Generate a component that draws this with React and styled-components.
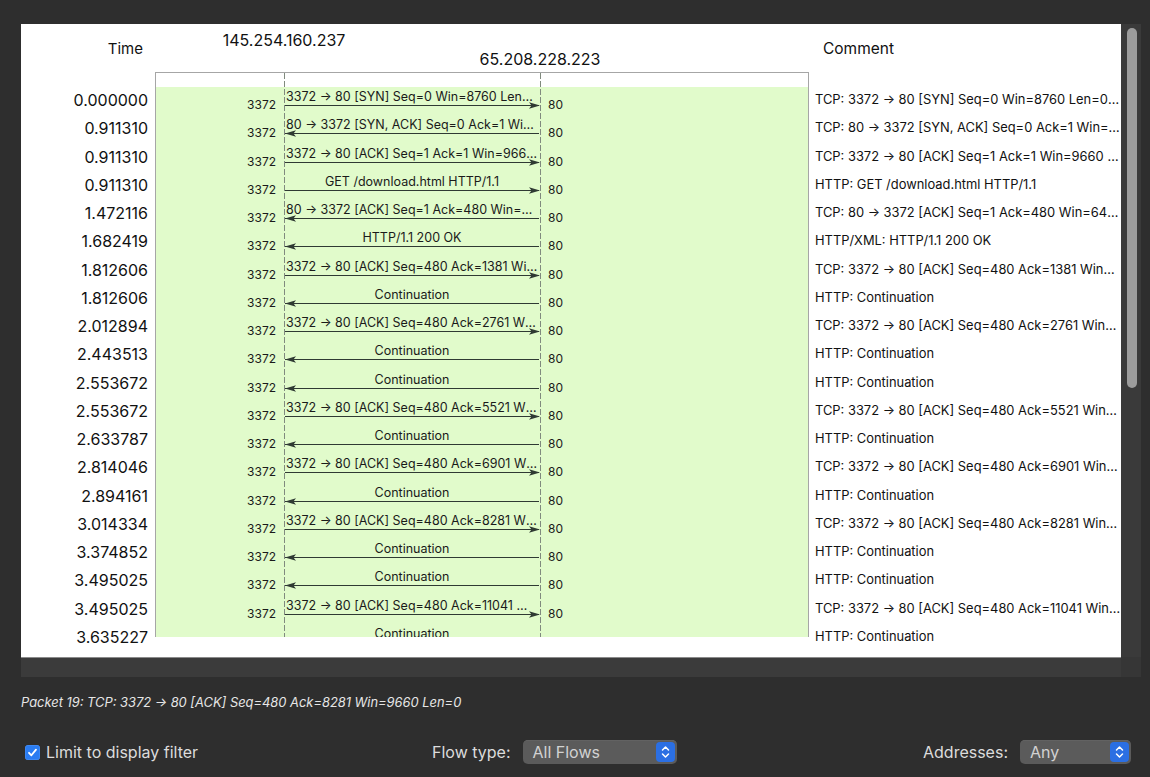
import React from 'react';
import styled, { createGlobalStyle } from 'styled-components';

const FONT = `Inter, "Noto Sans", "Liberation Sans", sans-serif`;
const ROW_H = 28.25;

const GlobalStyle = createGlobalStyle`
  html, body { margin: 0; padding: 0; background: #2e2e2e; }
  body { font-family: ${FONT}; width: 1150px; height: 777px; overflow: hidden; }
  * { box-sizing: border-box; }
`;

const Window = styled.div`
  width: 1150px;
  height: 777px;
  background: #2e2e2e;
  padding-top: 24px;
  display: flex;
  flex-direction: column;
`;

const PlotFrame = styled.div`
  display: flex;
  margin-left: 21px;
  height: 653px;
`;

const PlotMain = styled.div`
  width: 1100px;
  display: flex;
  flex-direction: column;
`;

const Sheet = styled.div`
  height: 633px;
  background: #fff;
  display: grid;
  grid-template-columns: 134px 654px 1fr;
  overflow: hidden;
`;

const HScroll = styled.div`
  height: 20px;
  background: #3b3b3b;
  border-top: 1px solid #8a8a8a;
`;

const VScroll = styled.div`
  width: 20px;
  display: flex;
  flex-direction: column;
`;

const VTrack = styled.div`
  height: 633px;
  background: #3a3a3a;
  padding: 4px 0 0 6px;
`;

const VCorner = styled.div`
  height: 20px;
  background: #363636;
`;

const Thumb = styled.div`
  width: 10px;
  height: 360px;
  border-radius: 5px;
  background: #9c9c9c;
`;

const Column = styled.div`
  display: flex;
  flex-direction: column;
  min-width: 0;
`;

const ColHeader = styled.div`
  height: 62px;
  padding-top: 15px;
  font-size: ${(p) => p.$size || 15}px;
  line-height: 20px;
  color: #111;
  text-align: ${(p) => p.$align || 'left'};
  padding-left: ${(p) => p.$pl || 0}px;
  padding-right: ${(p) => p.$pr || 0}px;
`;

const TimeCell = styled.div`
  height: ${ROW_H}px;
  display: flex;
  align-items: center;
  justify-content: flex-end;
  padding-right: 7px;
  font-size: 16px;
  color: #111;
`;

const CommentCell = styled.div`
  height: ${ROW_H}px;
  line-height: ${ROW_H}px;
  padding-left: 6px;
  font-size: 12.9px;
  color: #111;
  white-space: nowrap;
  overflow: hidden;
  text-overflow: ellipsis;
`;

const GraphHead = styled.div`
  height: 48px;
  position: relative;
`;

const NodeLabel = styled.div`
  position: absolute;
  left: ${(p) => p.$x}px;
  top: ${(p) => p.$y}px;
  transform: translateX(-50%);
  font-size: 16px;
  line-height: 20px;
  color: #111;
  white-space: nowrap;
`;

const GraphBox = styled.div`
  position: relative;
  height: 565px;
  border: 1px solid #a6a6a6;
  border-bottom: none;
  overflow: hidden;
  display: flex;
  flex-direction: column;
`;

const TopBand = styled.div`
  height: 14px;
  flex: none;
  background: #fff;
`;

const PlotArea = styled.div`
  flex: 1;
  background: #e1fbcb;
`;

const NodeLine = styled.div`
  position: absolute;
  top: 0;
  bottom: 0;
  left: ${(p) => p.$x}px;
  width: 1px;
  background: repeating-linear-gradient(
    to bottom,
    #808a7e 0 6px,
    transparent 6px 8px
  );
`;

const FlowRow = styled.div`
  height: ${ROW_H}px;
  display: grid;
  grid-template-columns: 120px 8px 256px 8px 1fr;
`;

const Port = styled.div`
  padding-top: 11px;
  font-size: 12px;
  line-height: 14px;
  color: #1a1a1a;
  text-align: ${(p) => p.$align};
`;

const ArrowCell = styled.div`
  display: flex;
  flex-direction: column;
  padding-top: 2px;
  min-width: 0;
`;

const ArrowLabel = styled.div`
  height: 16px;
  font-size: 12.5px;
  line-height: 16px;
  color: #1a1a1a;
  padding: 0 2px;
  text-align: center;
  white-space: nowrap;
  overflow: hidden;
  text-overflow: ellipsis;
`;

const ArrowSvg = styled.svg`
  display: block;
  margin-top: -4px;
`;

const StatusLine = styled.div`
  margin-top: 16px;
  height: 20px;
  line-height: 20px;
  padding-left: 21px;
  font-size: 12.9px;
  font-style: italic;
  color: #e6e6e6;
`;

const Controls = styled.div`
  margin-top: 26px;
  height: 26px;
  padding-left: 25px;
  display: grid;
  grid-template-columns: 407px 491px auto;
  align-items: center;
`;

const Group = styled.div`
  display: flex;
  align-items: center;
  gap: ${(p) => p.$gap}px;
`;

const CheckBox = styled.span`
  width: 15px;
  height: 15px;
  border-radius: 3.5px;
  background: #2a7cf2;
  box-shadow: inset 0 0 0 0.5px #4f94f7;
  display: flex;
  align-items: center;
  justify-content: center;
`;

const Label = styled.span`
  font-size: 16px;
  color: #dcdcdc;
  white-space: nowrap;
`;

const Select = styled.div`
  width: ${(p) => p.$w}px;
  height: 24px;
  border-radius: 5px;
  background: #5b5b5b;
  box-shadow: inset 0 0.5px 0 #6b6b6b;
  display: flex;
  align-items: center;
  justify-content: space-between;
  padding: 0 2px 0 10px;
  font-size: 16px;
  color: #d2d2d2;
`;

const Stepper = styled.span`
  width: 19px;
  height: 20px;
  border-radius: 4px;
  background: #2b6fe3;
  display: flex;
  align-items: center;
  justify-content: center;
`;

const rows = [
  ['0.000000', 'r', '3372 → 80 [SYN] Seq=0 Win=8760 Len=0 MSS=1460 SACK_PERM', 'TCP: 3372 → 80 [SYN] Seq=0 Win=8760 Len=0 MSS=1460 SACK_PERM'],
  ['0.911310', 'l', '80 → 3372 [SYN, ACK] Seq=0 Ack=1 Win=5840 Len=0 MSS=1380 SACK_PERM', 'TCP: 80 → 3372 [SYN, ACK] Seq=0 Ack=1 Win=5840 Len=0 MSS=1380 SACK_PERM'],
  ['0.911310', 'r', '3372 → 80 [ACK] Seq=1 Ack=1 Win=9660 Len=0', 'TCP: 3372 → 80 [ACK] Seq=1 Ack=1 Win=9660 Len=0'],
  ['0.911310', 'r', 'GET /download.html HTTP/1.1', 'HTTP: GET /download.html HTTP/1.1'],
  ['1.472116', 'l', '80 → 3372 [ACK] Seq=1 Ack=480 Win=6432 Len=0', 'TCP: 80 → 3372 [ACK] Seq=1 Ack=480 Win=6432 Len=0'],
  ['1.682419', 'l', 'HTTP/1.1 200 OK', 'HTTP/XML: HTTP/1.1 200 OK'],
  ['1.812606', 'r', '3372 → 80 [ACK] Seq=480 Ack=1381 Win=9660 Len=0', 'TCP: 3372 → 80 [ACK] Seq=480 Ack=1381 Win=9660 Len=0'],
  ['1.812606', 'l', 'Continuation', 'HTTP: Continuation'],
  ['2.012894', 'r', '3372 → 80 [ACK] Seq=480 Ack=2761 Win=9660 Len=0', 'TCP: 3372 → 80 [ACK] Seq=480 Ack=2761 Win=9660 Len=0'],
  ['2.443513', 'l', 'Continuation', 'HTTP: Continuation'],
  ['2.553672', 'l', 'Continuation', 'HTTP: Continuation'],
  ['2.553672', 'r', '3372 → 80 [ACK] Seq=480 Ack=5521 Win=9660 Len=0', 'TCP: 3372 → 80 [ACK] Seq=480 Ack=5521 Win=9660 Len=0'],
  ['2.633787', 'l', 'Continuation', 'HTTP: Continuation'],
  ['2.814046', 'r', '3372 → 80 [ACK] Seq=480 Ack=6901 Win=9660 Len=0', 'TCP: 3372 → 80 [ACK] Seq=480 Ack=6901 Win=9660 Len=0'],
  ['2.894161', 'l', 'Continuation', 'HTTP: Continuation'],
  ['3.014334', 'r', '3372 → 80 [ACK] Seq=480 Ack=8281 Win=9660 Len=0', 'TCP: 3372 → 80 [ACK] Seq=480 Ack=8281 Win=9660 Len=0'],
  ['3.374852', 'l', 'Continuation', 'HTTP: Continuation'],
  ['3.495025', 'l', 'Continuation', 'HTTP: Continuation'],
  ['3.495025', 'r', '3372 → 80 [ACK] Seq=480 Ack=11041 Win=9660 Len=0', 'TCP: 3372 → 80 [ACK] Seq=480 Ack=11041 Win=9660 Len=0'],
  ['3.635227', 'l', 'Continuation', 'HTTP: Continuation'],
];

function Arrow({ dir }) {
  const c = '#2f3a33';
  return (
    <ArrowSvg width="256" height="9" viewBox="0 0 256 9">
      <line x1="1" y1="4.5" x2="255" y2="4.5" stroke={c} strokeWidth="1.1" />
      {dir === 'r' ? (
        <polygon points="256,4.5 245,1.3 247.5,4.5 245,7.7" fill={c} />
      ) : (
        <polygon points="1,4.5 12,1.3 9.5,4.5 12,7.7" fill={c} />
      )}
    </ArrowSvg>
  );
}

function Chevrons() {
  return (
    <svg width="9" height="14" viewBox="0 0 9 14">
      <path d="M1.5 5 L4.5 2 L7.5 5 M1.5 9 L4.5 12 L7.5 9" fill="none" stroke="#fff" strokeWidth="1.5" strokeLinecap="round" strokeLinejoin="round" />
    </svg>
  );
}

export default function App() {
  return (
    <Window>
      <GlobalStyle />
      <PlotFrame>
        <PlotMain>
          <Sheet>
            <Column>
              <ColHeader $align="right" $pr={12}>Time</ColHeader>
              {rows.map((r, i) => (
                <TimeCell key={i}>{r[0]}</TimeCell>
              ))}
            </Column>
            <Column>
              <GraphHead>
                <NodeLabel $x={129} $y={6}>145.254.160.237</NodeLabel>
                <NodeLabel $x={385} $y={25}>65.208.228.223</NodeLabel>
              </GraphHead>
              <GraphBox>
                <TopBand />
                <PlotArea>
                  {rows.map((r, i) => (
                    <FlowRow key={i}>
                      <Port $align="right">3372</Port>
                      <span />
                      <ArrowCell>
                        <ArrowLabel>{r[2]}</ArrowLabel>
                        <Arrow dir={r[1]} />
                      </ArrowCell>
                      <span />
                      <Port $align="left">80</Port>
                    </FlowRow>
                  ))}
                </PlotArea>
                <NodeLine $x={128} />
                <NodeLine $x={384} />
              </GraphBox>
            </Column>
            <Column>
              <ColHeader $pl={14} $size={15.5}>Comment</ColHeader>
              {rows.map((r, i) => (
                <CommentCell key={i}>{r[3]}</CommentCell>
              ))}
            </Column>
          </Sheet>
          <HScroll />
        </PlotMain>
        <VScroll>
          <VTrack>
            <Thumb />
          </VTrack>
          <VCorner />
        </VScroll>
      </PlotFrame>
      <StatusLine>Packet 19: TCP: 3372 → 80 [ACK] Seq=480 Ack=8281 Win=9660 Len=0</StatusLine>
      <Controls>
        <Group $gap={6}>
          <CheckBox>
            <svg width="11" height="11" viewBox="0 0 11 11">
              <path d="M2 5.8 L4.4 8.3 L9 2.6" fill="none" stroke="#fff" strokeWidth="1.8" strokeLinecap="round" strokeLinejoin="round" />
            </svg>
          </CheckBox>
          <Label>Limit to display filter</Label>
        </Group>
        <Group $gap={12}>
          <Label>Flow type:</Label>
          <Select $w={154}>
            <span>All Flows</span>
            <Stepper><Chevrons /></Stepper>
          </Select>
        </Group>
        <Group $gap={12}>
          <Label>Addresses:</Label>
          <Select $w={111}>
            <span>Any</span>
            <Stepper><Chevrons /></Stepper>
          </Select>
        </Group>
      </Controls>
    </Window>
  );
}
